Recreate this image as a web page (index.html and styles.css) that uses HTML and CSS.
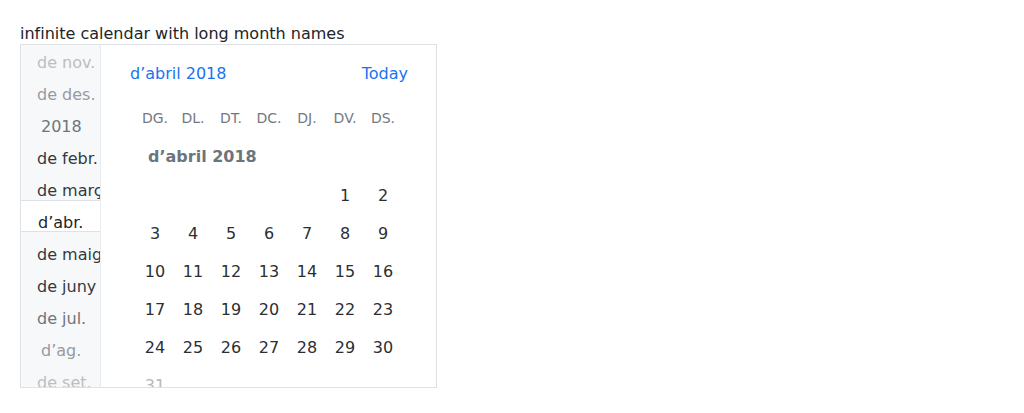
FILE: index.html
```html
<!DOCTYPE html>
<html lang="ca">
<head>
<meta charset="utf-8">
<title>infinite calendar</title>
<link rel="stylesheet" href="styles.css">
</head>
<body>
<div class="title">infinite calendar with long month names</div>
<div class="calendar">
  <div class="months">
    <div class="highlight"></div>
    <div class="month m-fade3">de nov.</div>
    <div class="month m-fade2">de des.</div>
    <div class="month m-fade1 m-indent">2018</div>
    <div class="month">de febr.</div>
    <div class="month">de març</div>
    <div class="month m-current">d’abr.</div>
    <div class="month">de maig</div>
    <div class="month">de juny</div>
    <div class="month m-fade1">de jul.</div>
    <div class="month m-fade2 m-indent">d’ag.</div>
    <div class="month m-fade3">de set.</div>
  </div>
  <div class="panel">
    <div class="header">
      <span class="header-month">d’abril 2018</span>
      <span class="today">Today</span>
    </div>
    <div class="grid weekdays">
      <span>DG.</span><span>DL.</span><span>DT.</span><span>DC.</span><span>DJ.</span><span>DV.</span><span>DS.</span>
    </div>
    <div class="month-label">d’abril 2018</div>
    <div class="grid days">
      <span></span><span></span><span></span><span></span><span></span><span>1</span><span>2</span>
      <span>3</span><span>4</span><span>5</span><span>6</span><span>7</span><span>8</span><span>9</span>
      <span>10</span><span>11</span><span>12</span><span>13</span><span>14</span><span>15</span><span>16</span>
      <span>17</span><span>18</span><span>19</span><span>20</span><span>21</span><span>22</span><span>23</span>
      <span>24</span><span>25</span><span>26</span><span>27</span><span>28</span><span>29</span><span>30</span>
      <span class="faded">31</span>
    </div>
  </div>
</div>
</body>
</html>
```
FILE: styles.css
```css
html, body {
  margin: 0;
  background: #ffffff;
}
body {
  padding: 24px 20px;
  font-family: "DejaVu Sans", sans-serif;
  color: #212529;
}
.title {
  font-size: 16px;
  line-height: 20px;
  height: 20px;
}
.calendar {
  width: 415px;
  height: 342px;
  border: 1px solid #dee2e6;
  display: flex;
  overflow: hidden;
}
.months {
  position: relative;
  width: 79px;
  flex: none;
  background: #f7f8fa;
  border-right: 1px solid #e9ecef;
  padding-top: 2px;
  overflow: hidden;
}
.highlight {
  position: absolute;
  left: 0;
  right: -1px;
  top: 155px;
  height: 30px;
  background: #ffffff;
  border-top: 1px solid #dee2e6;
  border-bottom: 1px solid #dee2e6;
}
.month {
  position: relative;
  height: 32px;
  line-height: 32px;
  padding-left: 16px;
  font-size: 16px;
  white-space: nowrap;
  color: #343a40;
}
.m-indent { padding-left: 20px; }
.m-current { padding-left: 17px; color: #212529; }
.m-fade1 { color: #6f757b; }
.m-fade2 { color: #979a9e; }
.m-fade3 { color: #bcbec1; }
.panel {
  flex: 1;
  overflow: hidden;
  padding: 0 35px;
}
.header {
  height: 56px;
  display: flex;
  align-items: center;
  justify-content: space-between;
  margin: 0 -7px 0 -6px;
  font-size: 16px;
  color: #1a73f0;
}
.grid {
  display: grid;
  grid-template-columns: repeat(7, 38px);
  text-align: center;
}
.weekdays {
  height: 34px;
  align-items: center;
  font-size: 14px;
  color: #73797f;
}
.month-label {
  height: 38px;
  margin-top: 3px;
  line-height: 38px;
  padding-left: 12px;
  font-size: 16px;
  font-weight: bold;
  color: #6c757d;
}
.days {
  grid-auto-rows: 38px;
  align-items: center;
  font-size: 16px;
  color: #2b2f33;
}
.days .faded {
  color: #b5b8bb;
}
```
